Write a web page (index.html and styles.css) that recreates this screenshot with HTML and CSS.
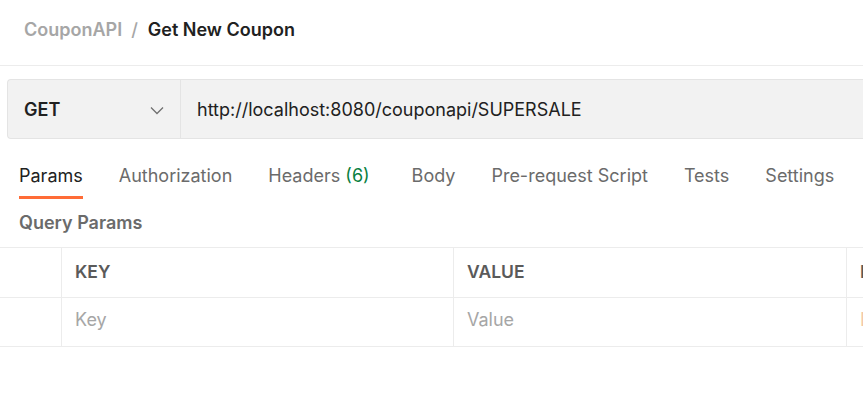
FILE: index.html
```html
<!DOCTYPE html>
<html>
<head>
<meta charset="utf-8">
<link rel="stylesheet" href="styles.css">
</head>
<body>
<div class="page">
  <div class="crumbs">
    <span class="crumb-parent">CouponAPI</span>
    <span class="crumb-sep">/</span>
    <span class="crumb-current">Get New Coupon</span>
  </div>
  <div class="urlbar">
    <div class="method">
      <span class="method-name">GET</span>
      <svg class="chev" width="16" height="16" viewBox="0 0 16 16"><path d="M2 5.5 L8 11.5 L14 5.5" fill="none" stroke="#707070" stroke-width="1.3"/></svg>
    </div>
    <div class="url">http://localhost:8080/couponapi/SUPERSALE</div>
  </div>
  <div class="tabs">
    <div class="tab active">Params</div>
    <div class="tab">Authorization</div>
    <div class="tab headers">Headers <span class="count">(6)</span></div>
    <div class="tab">Body</div>
    <div class="tab">Pre-request Script</div>
    <div class="tab">Tests</div>
    <div class="tab">Settings</div>
  </div>
  <div class="section-title">Query Params</div>
  <div class="table">
    <div class="row head">
      <div class="cell check"></div>
      <div class="cell key">KEY</div>
      <div class="cell val">VALUE</div>
      <div class="cell desc">D</div>
    </div>
    <div class="row body-row">
      <div class="cell check"></div>
      <div class="cell key ph">Key</div>
      <div class="cell val ph">Value</div>
      <div class="cell desc ph orange">D</div>
    </div>
  </div>
</div>
</body>
</html>
```
FILE: styles.css
```css
html, body { margin: 0; padding: 0; background: #fff; }
body { font-family: Inter, "Noto Sans", sans-serif; color: #212121; overflow: hidden; width: 863px; height: 420px; }
.page { width: 863px; }
.crumbs { height: 66px; display: flex; align-items: center; padding-left: 24px; font-size: 18px; font-weight: 600; border-bottom: 1px solid #ececec; box-sizing: border-box; padding-bottom: 7px; }
.crumb-parent { color: #a6a6a6; }
.crumb-sep { color: #a6a6a6; margin: 0 10px 0 9px; font-weight: 500; }
.crumb-current { color: #212121; }
.urlbar { margin: 13px 0 0 7px; height: 60px; display: flex; background: #f2f2f2; border: 1px solid #e4e4e4; border-right: none; border-radius: 4px 0 0 4px; box-sizing: border-box; }
.method { width: 173px; flex-shrink: 0; display: flex; align-items: center; justify-content: space-between; padding: 0 15px 0 16px; box-sizing: border-box; border-right: 1px solid #e4e4e4; }
.method-name { font-weight: 600; font-size: 18px; color: #212121; }
.chev { margin-top: 1px; }
.url { display: flex; align-items: center; padding-left: 16px; font-size: 18px; color: #212121; white-space: nowrap; }
.tabs { display: flex; padding-left: 19px; height: 60px; white-space: nowrap; }
.tab { flex-shrink: 0; font-size: 18px; color: #6b6b6b; margin-right: 36px; height: 60px; box-sizing: border-box; padding-top: 26px; }
.tab.headers { margin-right: 42px; }
.tab.active { color: #212121; border-bottom: 3px solid #ff6c37; }
.count { color: #0a7f3f; }
.section-title { font-size: 18px; font-weight: 600; color: #6b6b6b; padding-left: 19px; height: 48px; padding-bottom: 2px; box-sizing: border-box; display: flex; align-items: center; }
.table { border-top: 1px solid #ececec; }
.row { display: flex; height: 50px; border-bottom: 1px solid #ececec; box-sizing: border-box; }
.row.body-row { height: 49px; }
.cell { display: flex; align-items: center; padding-left: 13px; font-size: 18px; box-sizing: border-box; white-space: nowrap; }
.head .cell { padding-bottom: 2px; }
.body-row .cell { padding-bottom: 5px; }
.cell.check { width: 62px; border-right: 1px solid #ececec; padding-left: 0; }
.cell.key { width: 392px; border-right: 1px solid #ececec; }
.cell.val { width: 393px; border-right: 1px solid #ececec; }
.cell.desc { flex: 1; overflow: hidden; }
.head .cell { font-weight: 600; color: #5a5a5a; font-size: 17.5px; }
.ph { color: #a6a6a6; }
.orange { color: #f3c8a8; }
```
